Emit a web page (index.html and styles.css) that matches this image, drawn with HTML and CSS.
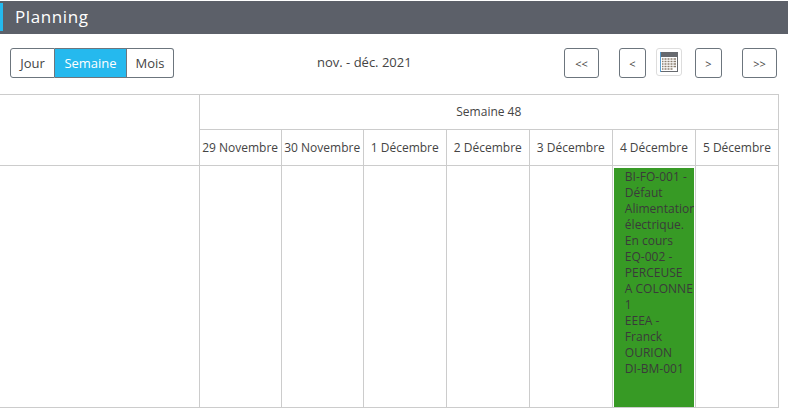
FILE: index.html
```html
<!DOCTYPE html>
<html lang="fr">
<head>
  <meta charset="UTF-8" />
  <title>Planning</title>
  <link rel="stylesheet" href="styles.css">
</head>
<body>

<div class="title-bar">
  <span class="title-mark"></span>
  <h1>Planning</h1>
</div>

<div class="toolbar">
  <div class="view-group">
    <button class="view-btn">Jour</button>
    <button class="view-btn active">Semaine</button>
    <button class="view-btn">Mois</button>
  </div>
  <div class="period">nov. - déc. 2021</div>
  <div class="nav">
    <button class="nav-btn wide">&lt;&lt;</button>
    <button class="nav-btn prev">&lt;</button>
    <span class="cal-btn">
      <svg width="18" height="20" viewBox="0 0 18 20">
        <rect x="0" y="0" width="18" height="20" fill="#66696e"/>
        <rect x="0" y="0" width="1" height="20" fill="#5a9fd0"/>
        <rect x="1" y="5" width="16" height="14" fill="#fff"/>
        <path d="M2 7h14M2 9.500h14M2 12h14M2 14.500h14M2 17h11" stroke="#8b7f70" stroke-width="1.400"/>
        <path d="M4 6v12M7 6v12M10 6v12M13 6v12" stroke="#fff" stroke-width="1"/>
      </svg>
    </span>
    <button class="nav-btn next">&gt;</button>
    <button class="nav-btn wide last">&gt;&gt;</button>
  </div>
</div>

<table class="planning">
  <colgroup>
    <col class="col-label">
    <col class="col-a"><col class="col-a"><col class="col-b"><col class="col-b"><col class="col-b"><col class="col-b"><col class="col-b">
  </colgroup>
  <tr class="row-week">
    <td class="blank"></td>
    <td colspan="7">Semaine 48</td>
  </tr>
  <tr class="row-days">
    <td class="blank"></td>
    <td>29 Novembre</td>
    <td>30 Novembre</td>
    <td>1 Décembre</td>
    <td>2 Décembre</td>
    <td>3 Décembre</td>
    <td>4 Décembre</td>
    <td>5 Décembre</td>
  </tr>
  <tr class="row-body">
    <td></td>
    <td></td>
    <td></td>
    <td></td>
    <td></td>
    <td></td>
    <td>
      <div class="event">
        BI-FO-001 -<br>
        Défaut<br>
        <span class="nowrap">Alimentation</span><br>
        électrique.<br>
        En cours<br>
        EQ-002 -<br>
        PERCEUSE<br>
        <span class="nowrap">A COLONNE</span><br>
        1<br>
        EEEA -<br>
        Franck<br>
        OURION<br>
        DI-BM-001
      </div>
    </td>
    <td></td>
  </tr>
</table>

</body>
</html>
```

FILE: styles.css
```css
body {
  margin: 0;
  font-family: "Open Sans", sans-serif;
  font-size: 12px;
  color: #444;
  background: #fff;
  overflow: hidden;
}
.title-bar {
  display: flex;
  align-items: center;
  height: 33px;
  margin-top: 1px;
  background: #5c6069;
}
.title-mark {
  width: 3px;
  height: 28px;
  margin-right: 12px;
  margin-top: 2px;
  align-self: flex-start;
  background: #25b9ee;
}
h1 {
  margin: 0 0 2px;
  font-family: "Open Sans", sans-serif;
  font-size: 17px;
  font-weight: 400;
  letter-spacing: 0.6px;
  color: #fff;
}
.toolbar {
  display: flex;
  align-items: center;
  height: 30px;
  margin: 14px 11px 16px 10px;
  position: relative;
}
button {
  font-family: "Open Sans", sans-serif;
  font-size: 13px;
  color: #444;
  background: #fff;
  cursor: pointer;
}
.view-group {
  display: flex;
  height: 30px;
}
.view-btn {
  padding: 0;
  border: 1px solid #6c757d;
  border-left: none;
}
.view-btn:nth-child(1) {
  width: 45px;
  border-left: 1px solid #6c757d;
  border-radius: 3px 0 0 3px;
}
.view-btn:nth-child(2) { width: 72px; }
.view-btn:nth-child(3) {
  width: 47px;
  border-radius: 0 3px 3px 0;
}
.view-btn.active {
  background: #25b9ee;
  color: #fff;
}
.period {
  position: absolute;
  left: 307px;
  top: 5px;
  font-size: 13px;
}
.nav {
  display: flex;
  align-items: center;
  margin-left: auto;
}
.nav-btn {
  height: 30px;
  padding: 0;
  border: 1px solid #6c757d;
  border-radius: 3px;
  font-size: 11px;
}
.nav-btn.wide { width: 35px; }
.nav-btn.prev { width: 27px; margin-left: 20px; }
.nav-btn.next { width: 27px; }
.nav-btn.last { margin-left: 20px; }
.cal-btn {
  display: flex;
  align-items: center;
  justify-content: center;
  width: 26px;
  height: 28px;
  margin: 0 13px 2px 10px;
  box-sizing: border-box;
  border: 1px solid #ddd;
  border-radius: 3px;
}
.planning {
  width: 779px;
  table-layout: fixed;
  border-collapse: collapse;
  text-align: center;
}
.planning td {
  padding: 0;
  border: 1px solid #ccc;
  white-space: nowrap;
}
.planning tr > td:first-child {
  border-left: none;
}
.planning .blank {
  border-bottom: none;
}
.planning .row-days .blank {
  border-top: none;
}
.col-label { width: 199px; }
.col-a { width: 82px; }
.col-b { width: 83px; }
.row-week td { height: 32px; padding-bottom: 2px; }
.row-days td { height: 35px; }
.row-body td {
  height: 241px;
  vertical-align: top;
  white-space: normal;
}
.event {
  box-sizing: border-box;
  height: 239px;
  margin: 2px 1px 0 1px;
  padding: 1px 0 0 11px;
  overflow: hidden;
  background: #379a25;
  color: #3a3a3a;
  text-align: left;
  line-height: 16px;
}
.nowrap { white-space: nowrap; }
```
